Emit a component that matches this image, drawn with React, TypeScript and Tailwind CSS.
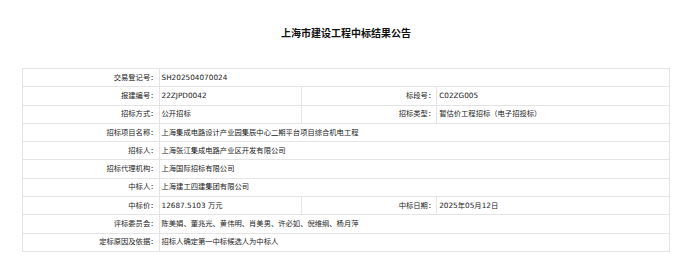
const rows: (string[])[] = [
  ["交易登记号", "SH202504070024"],
  ["报建编号", "22ZJPD0042", "标段号", "C02ZG005"],
  ["招标方式", "公开招标", "招标类型", "暂估价工程招标（电子招投标）"],
  ["招标项目名称", "上海集成电路设计产业园集辰中心二期平台项目综合机电工程"],
  ["招标人", "上海张江集成电路产业区开发有限公司"],
  ["招标代理机构", "上海国际招标有限公司"],
  ["中标人", "上海建工四建集团有限公司"],
  ["中标价", "12687.5103 万元", "中标日期", "2025年05月12日"],
  ["评标委员会", "陈美娟、董兆光、黄伟明、肖美男、许必如、倪维纲、杨月萍"],
  ["定标原因及依据", "招标人确定第一中标候选人为中标人"],
];

function Label({ text }: { text: string }) {
  return (
    <td className="border border-[#e4e4e4] pr-[1px] text-right align-middle whitespace-nowrap">
      {text}：
    </td>
  );
}

function Value({ text, span }: { text: string; span?: number }) {
  return (
    <td colSpan={span} className="border border-[#e4e4e4] pl-[2px] text-left align-middle whitespace-nowrap">
      {text}
    </td>
  );
}

export default function App() {
  return (
    <div
      className="h-[276px] w-[692px] overflow-hidden bg-white text-[#222]"
      style={{ fontFamily: '"DejaVu Sans", "Noto Sans CJK SC", sans-serif' }}
    >
      <h1 className="pt-[27px] text-center text-[10px] leading-[14px] font-bold text-[#111]">
        上海市建设工程中标结果公告
      </h1>
      <table className="mt-[27px] ml-[22px] w-[646.5px] table-fixed border-collapse text-[7.3px] leading-[10px]">
        <colgroup>
          <col className="w-[136.5px]" />
          <col className="w-[142.7px]" />
          <col className="w-[135px]" />
          <col className="w-[232.3px]" />
        </colgroup>
        <tbody>
          {rows.map((r) => (
            <tr key={r[0]} className="h-[18.3px]">
              <Label text={r[0]} />
              {r.length === 4 ? (
                <>
                  <Value text={r[1]} />
                  <Label text={r[2]} />
                  <Value text={r[3]} />
                </>
              ) : (
                <Value text={r[1]} span={3} />
              )}
            </tr>
          ))}
        </tbody>
      </table>
    </div>
  );
}
